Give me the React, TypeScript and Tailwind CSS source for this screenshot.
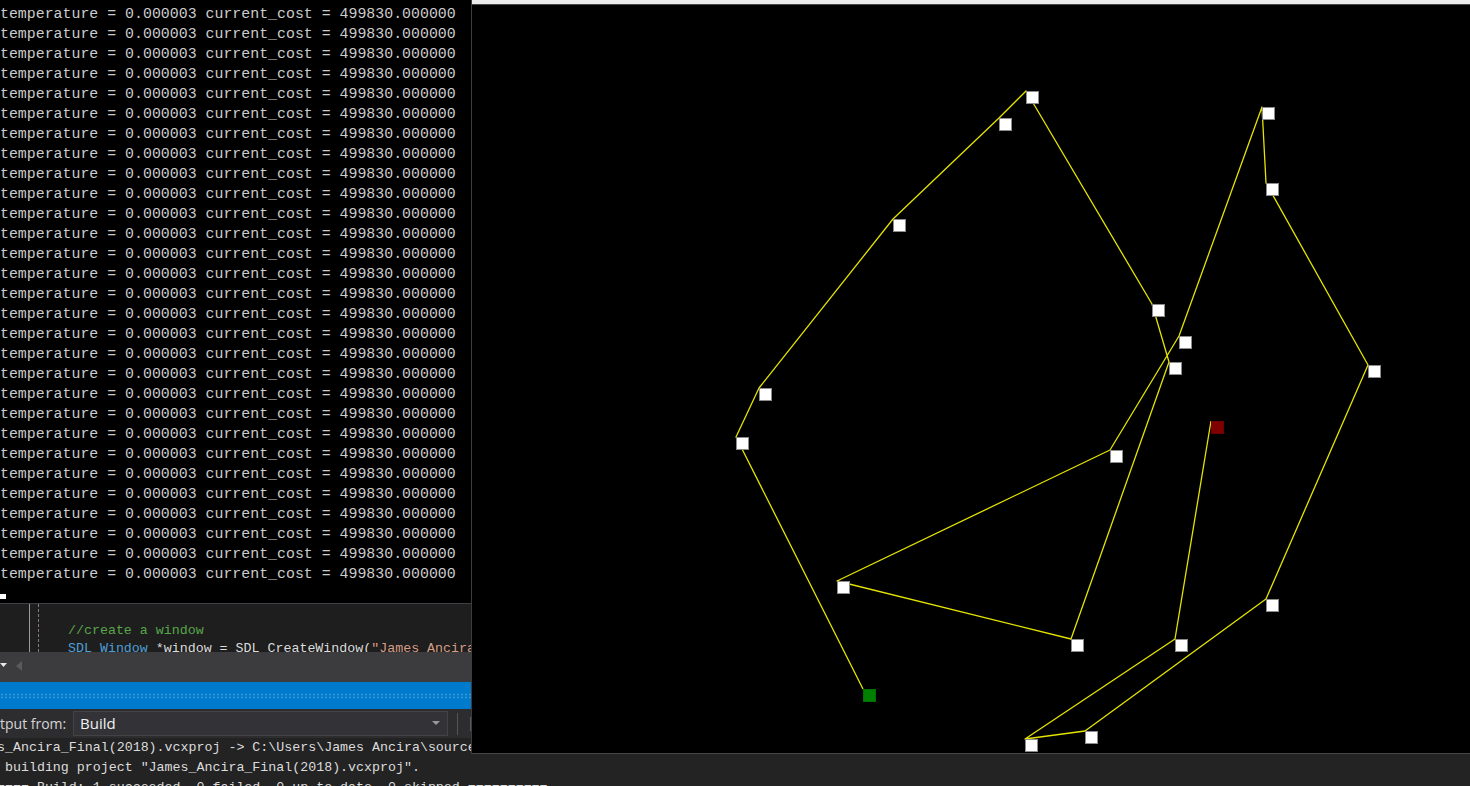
import React from "react";

const consoleLine = "temperature = 0.000003 current_cost = 499830.000000";

const pts: [number, number][] = [
  [863, 689],
  [736, 437],
  [759, 388],
  [893, 219],
  [999, 118],
  [1026, 91],
  [1152, 304],
  [1169, 362],
  [1071, 639],
  [837, 581],
  [1110, 450],
  [1179, 336],
  [1262, 107],
  [1266, 183],
  [1368, 365],
  [1266, 599],
  [1085, 731],
  [1025, 739],
  [1175, 639],
  [1211, 421],
];

function Canvas() {
  const d = pts.map((p, i) => `${i === 0 ? "M" : "L"}${p[0]} ${p[1]}`).join(" ");
  return (
    <svg width="998" height="748" viewBox="472 5 998 748" className="block">
      <path d={d} fill="none" stroke="#e4e400" strokeWidth="1.3" strokeLinejoin="round" />
      {pts.map((p, i) => {
        const first = i === 0;
        const last = i === pts.length - 1;
        const fill = first ? "#008000" : last ? "#800000" : "#ffffff";
        return (
          <rect
            key={i}
            x={p[0] + 0.5}
            y={p[1] + 0.5}
            width={12}
            height={12}
            fill={fill}
            stroke={first ? "#007000" : last ? "#700000" : "#8c8c8c"}
            strokeWidth={1}
          />
        );
      })}
    </svg>
  );
}

export default function App() {
  const mono = "font-['Liberation_Mono','DejaVu_Sans_Mono',monospace]";
  return (
    <div className="relative w-[1470px] h-[786px] overflow-hidden bg-[#1e1e1e]">
      <div className="flex flex-col w-full h-full">
        {/* console */}
        <div className={`h-[603px] bg-black pt-[4px] ${mono} text-[14.9px] leading-[20px] text-[#cccccc] whitespace-pre overflow-hidden`}>
          {Array.from({ length: 29 }).map((_, i) => (
            <div key={i}>{consoleLine}</div>
          ))}
          <div className="mt-[10px] w-[6px] h-[5px] bg-white" />
        </div>
        <div className="h-px bg-[#3f3f46]" />
        {/* editor */}
        <div className="h-[48px] bg-[#1e1e1e] flex overflow-hidden">
          <div className="w-[29px]" />
          <div className="w-px bg-[#9a9a9a]" />
          <div className="w-[8px]" />
          <div className="w-px border-l border-dashed border-[#8a7a80]" />
          <div className={`pl-[29px] ${mono} text-[13.3px] leading-[18px] whitespace-pre`}>
            <div>&nbsp;</div>
            <div className="text-[#57a64a]">//create a window</div>
            <div className="text-[#dcdcdc]">
              <span className="text-[#4e9fd6]">SDL_Window</span> *window = SDL_CreateWindow(
              <span className="text-[#d69d85]">"James_Ancira_Final"</span>
            </div>
          </div>
        </div>
        {/* scroll row */}
        <div className="h-[30px] bg-[#3c3c3f] flex items-start pt-[9px]">
          <svg width="8" height="6" viewBox="0 0 8 6" className="ml-0 mt-[2px]">
            <path d="M0 0 L7 0 L3.5 4 Z" fill="#e8e8e8" />
          </svg>
          <svg width="8" height="10" viewBox="0 0 8 10" className="ml-[7px]">
            <path d="M7 0 L7 10 L1 5 Z" fill="#5a5a5d" />
          </svg>
        </div>
        {/* blue title bar */}
        <div className="h-[27px] bg-[#007acc] flex flex-col justify-center">
          <div className="h-[6px] bg-[radial-gradient(circle,#3b9ad9_0.8px,transparent_1.2px)] bg-[length:4px_3px]" />
        </div>
        {/* output toolbar */}
        <div className="h-[29px] bg-[#2d2d30] flex items-center font-['Open_Sans','Noto_Sans',sans-serif] text-[14px] text-[#d4d4d4]">
          <div className="w-[73px] overflow-hidden whitespace-nowrap">tput from:</div>
          <div className="w-[375px] h-[25px] border border-[#434346] bg-[#333337] flex items-center justify-between pl-[6px] pr-[7px] text-[#f1f1f1]">
            <span className="text-[15px]">Build</span>
            <svg width="8" height="5" viewBox="0 0 8 5">
              <path d="M0 0 L8 0 L4 4 Z" fill="#999999" />
            </svg>
          </div>
          <div className="ml-[9px] w-px h-[22px] bg-[#555558]" />
          <div className="ml-[12px] w-[10px] h-[14px] bg-[#5a5a5d]" />
        </div>
        {/* output text */}
        <div className={`flex-1 bg-[#232324] overflow-hidden ${mono} text-[13.3px] leading-[20px] text-[#dcdcdc] whitespace-pre`}>
          <div className="-ml-[3px]">
            <div>s_Ancira_Final(2018).vcxproj -&gt; C:\Users\James Ancira\source\repos</div>
            <div> building project "James_Ancira_Final(2018).vcxproj".</div>
            <div>==== Build: 1 succeeded, 0 failed, 0 up-to-date, 0 skipped ==========</div>
          </div>
        </div>
      </div>

      {/* SDL window overlay */}
      <div className="absolute left-[471px] top-0 w-[999px] h-[754px] flex flex-col border-l border-[#3c3c3c]">
        <div className="h-[4px] bg-[#ececec]" />
        <div className="h-px bg-[#4a4a4a]" />
        <div className="h-[748px] bg-black">
          <Canvas />
        </div>
        <div className="h-px bg-[#454545]" />
      </div>
    </div>
  );
}
